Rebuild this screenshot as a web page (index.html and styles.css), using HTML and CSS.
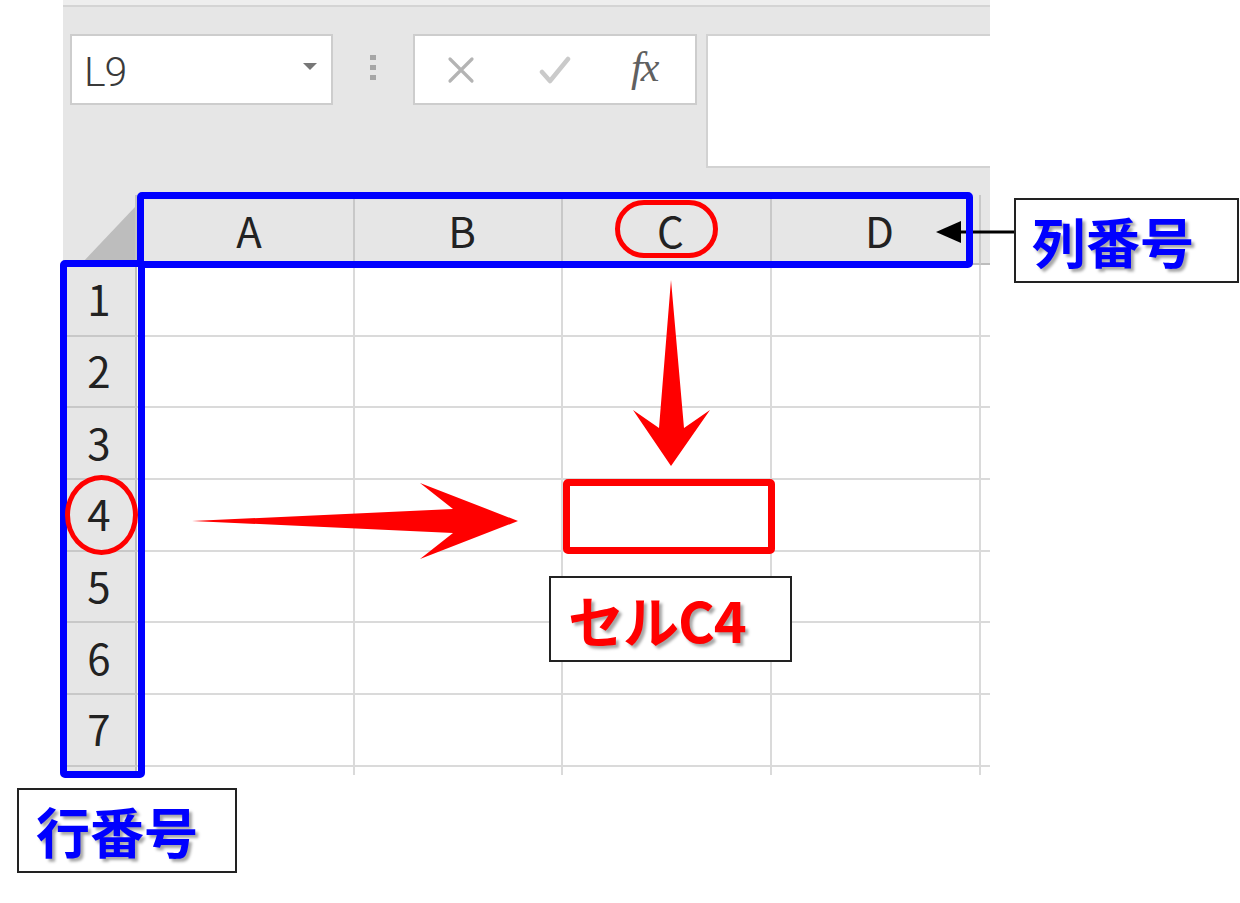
FILE: index.html
```html
<!DOCTYPE html>
<html lang="ja">
<head>
  <meta charset="UTF-8">
  <title>行番号と列番号</title>
  <link rel="stylesheet" href="styles.css">
</head>
<body>
  <div class="stage">
    <div class="excel">
      <div class="toolbar">
        <div class="toolbar-row">
          <div class="namebox">
            <span>L9</span>
            <i class="caret"></i>
          </div>
          <div class="dots"><i></i><i></i><i></i></div>
          <div class="fbuttons">
            <svg class="ico ico-x" width="28" height="28" viewBox="0 0 28 28">
              <path d="M3 3 L25 25 M25 3 L3 25" stroke="#b4b4b4" stroke-width="3.2" stroke-linecap="round" fill="none"/>
            </svg>
            <svg class="ico ico-ok" width="32" height="30" viewBox="0 0 32 30">
              <path d="M3 17 L11 26 L29 4" stroke="#cacaca" stroke-width="4.5" stroke-linecap="round" stroke-linejoin="round" fill="none"/>
            </svg>
            <span class="fx">fx</span>
          </div>
          <div class="finput"></div>
        </div>
      </div>

      <div class="sheet">
        <div class="corner">
          <svg width="74" height="70" viewBox="0 0 74 70"><polygon points="19,68 72,68 72,12" fill="#bdbdbd"/></svg>
        </div>
        <div class="colhead">A</div>
        <div class="colhead">B</div>
        <div class="colhead">C</div>
        <div class="colhead">D</div>
        <div class="colhead edge"></div>

        <div class="rowhead">1</div><div class="cell"></div><div class="cell"></div><div class="cell"></div><div class="cell"></div><div class="cell edge"></div>
        <div class="rowhead">2</div><div class="cell"></div><div class="cell"></div><div class="cell"></div><div class="cell"></div><div class="cell edge"></div>
        <div class="rowhead">3</div><div class="cell"></div><div class="cell"></div><div class="cell"></div><div class="cell"></div><div class="cell edge"></div>
        <div class="rowhead">4</div><div class="cell"></div><div class="cell"></div><div class="cell"></div><div class="cell"></div><div class="cell edge"></div>
        <div class="rowhead">5</div><div class="cell"></div><div class="cell"></div><div class="cell"></div><div class="cell"></div><div class="cell edge"></div>
        <div class="rowhead">6</div><div class="cell"></div><div class="cell"></div><div class="cell"></div><div class="cell"></div><div class="cell edge"></div>
        <div class="rowhead">7</div><div class="cell"></div><div class="cell"></div><div class="cell"></div><div class="cell"></div><div class="cell edge"></div>
        <div class="rowhead last"></div><div class="cell last"></div><div class="cell last"></div><div class="cell last"></div><div class="cell last"></div><div class="cell edge last"></div>
      </div>
    </div>

    <!-- 注釈 -->
    <svg class="arrows" width="1240" height="903" viewBox="0 0 1240 903">
      <polygon points="671,280 684,428 710,410 671,466 633,410 659,428" fill="#ff0000"/>
      <polygon points="192,521 453,509 420,483 518,521 420,559 453,533" fill="#ff0000"/>
      <line x1="958" y1="232" x2="1016" y2="232" stroke="#000" stroke-width="3"/>
      <polygon points="936,232 961,221 961,243" fill="#000"/>
    </svg>

    <div class="mark blue colmark"></div>
    <div class="mark blue rowmark"></div>
    <div class="mark red pill"></div>
    <div class="mark red ring"></div>
    <div class="mark red target"></div>

    <div class="label label-col"><span class="blue-text">列番号</span></div>
    <div class="label label-row"><span class="blue-text">行番号</span></div>
    <div class="label label-cell"><span class="red-text">セルC4</span></div>
  </div>
</body>
</html>
```

FILE: styles.css
```css
* {
  box-sizing: border-box;
}
body {
  margin: 0;
  background: #fff;
  font-family: "Noto Sans CJK JP", "Noto Sans", sans-serif;
}
.stage {
  position: relative;
  width: 1240px;
  height: 903px;
  overflow: hidden;
}
.excel {
  margin-left: 63px;
  width: 927px;
}

/* 数式バー */
.toolbar {
  height: 195px;
  background: #e6e6e6;
  border-top: 5px solid #eeeeee;
}
.toolbar-row {
  display: flex;
  align-items: flex-start;
  padding: 27px 0 0 7px;
  border-top: 2px solid #d4d4d4;
}
.namebox {
  width: 263px;
  height: 71px;
  background: #fff;
  border: 2px solid #cdcdcd;
  display: flex;
  align-items: center;
  justify-content: space-between;
  padding: 0 14px 0 12px;
}
.namebox span {
  font-family: Roboto, "Liberation Sans", sans-serif;
  font-weight: 300;
  font-size: 41px;
  color: #3a3a3a;
  letter-spacing: -1px;
  margin-top: 4px;
}
.caret {
  width: 0;
  height: 0;
  border-left: 7px solid transparent;
  border-right: 7px solid transparent;
  border-top: 7px solid #777;
  margin-top: -6px;
}
.dots {
  width: 80px;
  height: 71px;
  display: flex;
  flex-direction: column;
  align-items: center;
  gap: 5px;
  padding-top: 21px;
}
.dots i {
  width: 6px;
  height: 5px;
  background: #a6a6a6;
}
.fbuttons {
  width: 284px;
  height: 71px;
  background: #fff;
  border: 2px solid #cdcdcd;
  display: flex;
  align-items: center;
  padding-left: 32px;
}
.ico {
  display: block;
  flex: none;
}
.ico-ok {
  margin-left: 64px;
}
.fx {
  font-family: "Liberation Serif", serif;
  font-style: italic;
  font-size: 42px;
  color: #606060;
  letter-spacing: -2px;
  margin-top: -6px;
  margin-left: 60px;
}
.finput {
  flex: 1;
  margin-left: 9px;
  height: 134px;
  background: #fff;
  border: 2px solid #d2d2d2;
  border-right: none;
}

/* シート */
.sheet {
  display: grid;
  grid-template-columns: 74px 218px 208px 209px 209px 9px;
  grid-template-rows: 70px repeat(7, 71.7px) 8px;
  font-weight: 400;
  font-size: 42px;
  color: #222;
}
.corner {
  background: #e6e6e6;
  border-right: 2px solid #c4c4c4;
  border-bottom: 2px solid #c4c4c4;
}
.corner svg {
  display: block;
}
.colhead {
  background: #e6e6e6;
  border-right: 2px solid #c8c8c8;
  border-bottom: 2px solid #bdbdbd;
  display: flex;
  align-items: center;
  justify-content: center;
  padding-left: 8px;
}
.rowhead {
  background: #e6e6e6;
  border-right: 2px solid #bdbdbd;
  border-bottom: 2px solid #c8c8c8;
  display: flex;
  align-items: center;
  justify-content: center;
  padding-bottom: 4px;
}
.cell {
  border-right: 2px solid #dadada;
  border-bottom: 2px solid #dadada;
}
.edge {
  border-right: none;
}
.last {
  border-bottom: none;
}

/* 注釈 */
.arrows {
  position: absolute;
  left: 0;
  top: 0;
}
.mark {
  position: absolute;
}
.blue {
  border: 7px solid #0000ff;
  border-radius: 5px;
}
.colmark {
  left: 137px;
  top: 192px;
  width: 836px;
  height: 76px;
}
.rowmark {
  left: 60px;
  top: 260px;
  width: 85px;
  height: 518px;
}
.red {
  border: 5px solid #ff0000;
}
.pill {
  left: 615px;
  top: 200px;
  width: 103px;
  height: 58px;
  border-radius: 29px;
}
.ring {
  left: 65px;
  top: 475px;
  width: 73px;
  height: 80px;
  border-radius: 50%;
}
.target {
  left: 563px;
  top: 479px;
  width: 212px;
  height: 75px;
  border-width: 7px;
  border-radius: 5px;
}
.label {
  position: absolute;
  background: #fff;
  border: 2px solid #222;
  display: flex;
  align-items: center;
}
.label-col {
  left: 1014px;
  top: 198px;
  width: 225px;
  height: 85px;
  padding-left: 16px;
}
.label-row {
  left: 17px;
  top: 788px;
  width: 220px;
  height: 85px;
  padding-left: 17px;
}
.label-cell {
  left: 549px;
  top: 576px;
  width: 243px;
  height: 86px;
  padding-left: 17px;
}
.blue-text,
.red-text {
  font-family: "Noto Sans CJK JP", sans-serif;
  font-weight: 700;
  font-size: 54px;
  line-height: 1;
  text-shadow: 3px 3px 3px rgba(0, 0, 0, 0.35);
}
.blue-text {
  color: #0000ff;
}
.red-text {
  color: #ff0000;
  font-size: 56px;
  letter-spacing: -1px;
}
```
